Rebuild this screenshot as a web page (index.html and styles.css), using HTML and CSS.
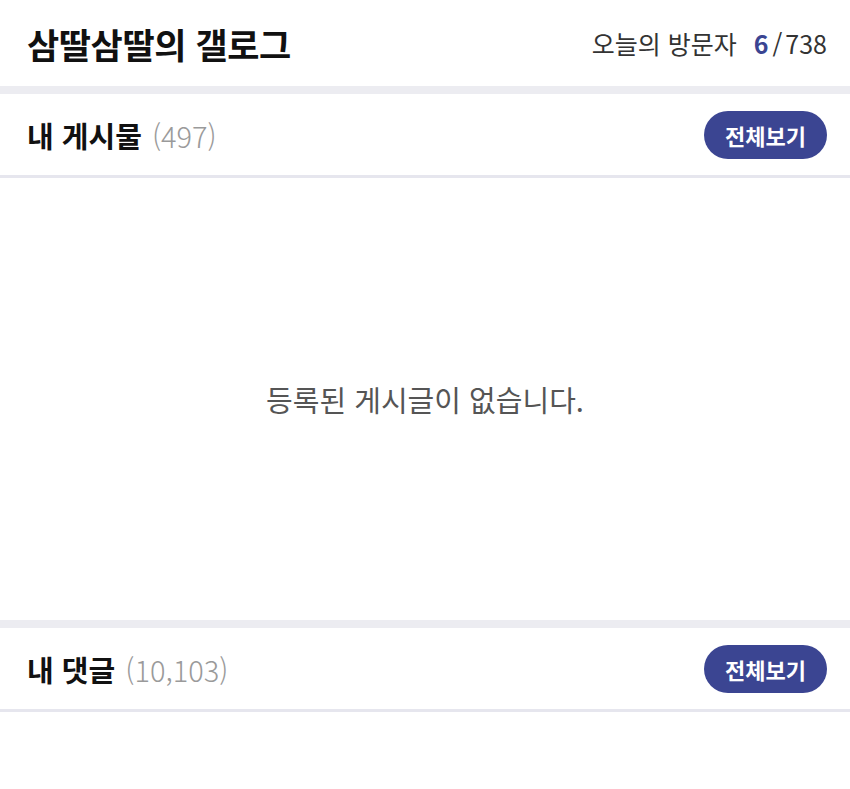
FILE: index.html
```html
<!DOCTYPE html>
<html lang="ko">
<head>
  <meta charset="UTF-8">
  <title>삼딸삼딸의 갤로그</title>
  <link rel="stylesheet" href="styles.css">
</head>
<body>
  <header class="top">
    <h1 class="title">삼딸삼딸의 갤로그</h1>
    <div class="visitors">
      <span class="label">오늘의 방문자</span>
      <b class="today">6</b><span class="slash">/</span><span class="total">738</span>
    </div>
  </header>

  <section class="box">
    <div class="box-head">
      <h2>내 게시물 <span class="count">(497)</span></h2>
      <a class="more" href="#">전체보기</a>
    </div>
    <div class="empty">등록된 게시글이 없습니다.</div>
  </section>

  <section class="box">
    <div class="box-head">
      <h2>내 댓글 <span class="count">(10,103)</span></h2>
      <a class="more" href="#">전체보기</a>
    </div>
    <div class="list"></div>
  </section>
</body>
</html>
```

FILE: styles.css
```css
body {
  margin: 0;
  background: #fff;
  font-family: "Noto Sans CJK KR", "Noto Sans", sans-serif;
  color: #111;
}

.top {
  height: 86px;
  display: flex;
  align-items: center;
  justify-content: space-between;
  padding: 0 23px 0 27px;
  border-bottom: 8px solid #ececf1;
}

.title {
  margin: 0;
  font-size: 35px;
  font-weight: 700;
  letter-spacing: -0.4px;
}

.visitors {
  font-size: 25px;
  color: #333;
}

.visitors .label {
  margin-right: 10px;
}

.visitors .today {
  color: #3b4592;
  font-weight: 700;
  margin-right: 4px;
}

.visitors .slash {
  margin-right: 3px;
}

.box-head {
  height: 81px;
  display: flex;
  align-items: center;
  justify-content: space-between;
  padding: 0 23px 0 27px;
  border-bottom: 3px solid #e6e6ee;
}

.box-head h2 {
  margin: 0;
  font-size: 29px;
  font-weight: 700;
}

.count {
  color: #9a9a9a;
  font-weight: 300;
  margin-left: 2px;
}

.more {
  display: inline-flex;
  align-items: center;
  justify-content: center;
  width: 123px;
  height: 48px;
  border-radius: 24px;
  background: #3b4592;
  color: #fff;
  font-size: 22px;
  font-weight: 700;
  text-decoration: none;
}

.empty {
  height: 442px;
  display: flex;
  align-items: center;
  justify-content: center;
  font-size: 29px;
  color: #555;
  border-bottom: 8px solid #ececf1;
}

.list {
  height: 80px;
}
```
